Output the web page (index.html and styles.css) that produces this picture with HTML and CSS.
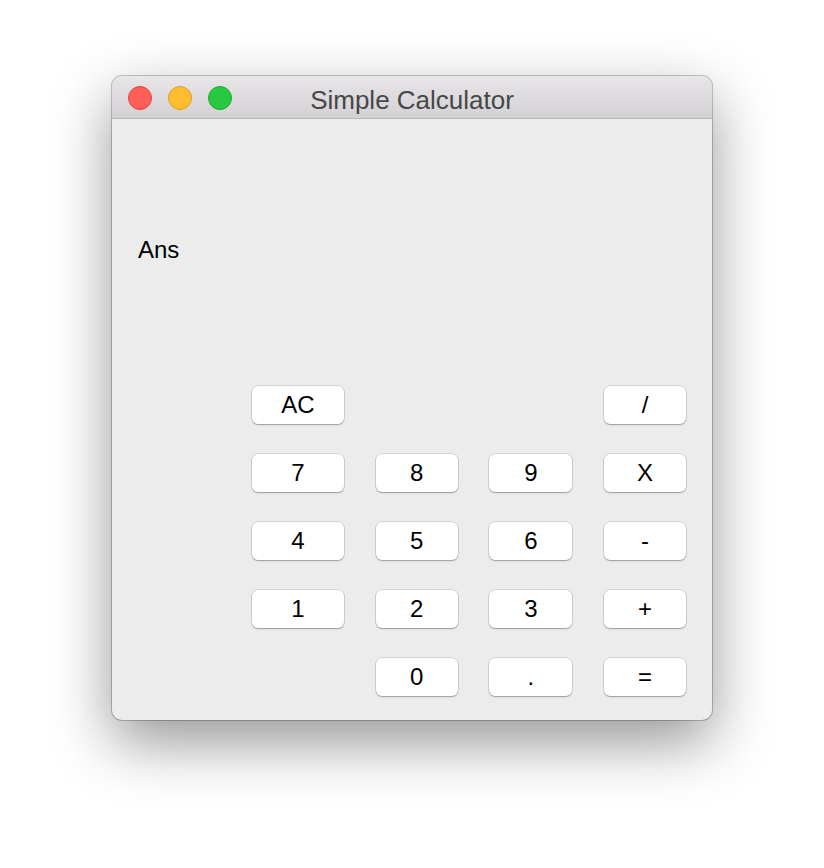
FILE: index.html
```html
<!DOCTYPE html>
<html>
<head>
<meta charset="utf-8">
<link rel="stylesheet" href="styles.css">
</head>
<body>
<div class="window">
  <div class="titlebar">
    <div class="lights">
      <span class="light red"></span>
      <span class="light yellow"></span>
      <span class="light green"></span>
    </div>
    <div class="title">Simple Calculator</div>
    <div></div>
  </div>
  <div class="content">
    <div class="ans">Ans</div>
    <div class="keys">
      <button class="key c1">AC</button>
      <button class="key c4">/</button>
      <button class="key">7</button>
      <button class="key">8</button>
      <button class="key">9</button>
      <button class="key">X</button>
      <button class="key">4</button>
      <button class="key">5</button>
      <button class="key">6</button>
      <button class="key">-</button>
      <button class="key">1</button>
      <button class="key">2</button>
      <button class="key">3</button>
      <button class="key">+</button>
      <button class="key c2">0</button>
      <button class="key">.</button>
      <button class="key">=</button>
    </div>
  </div>
</div>
</body>
</html>
```
FILE: styles.css
```css
html, body {
  margin: 0;
  padding: 0;
  background: #ffffff;
}
body {
  box-sizing: border-box;
  min-height: 868px;
  padding: 76px 0 0 112px;
  font-family: "Liberation Sans", Arial, sans-serif;
}
.window {
  width: 600px;
  height: 644px;
  box-sizing: border-box;
  border-radius: 10px;
  background: #ececec;
  box-shadow: 0 0 0 1px rgba(0,0,0,0.22), 0 22px 60px rgba(0,0,0,0.42);
  overflow: hidden;
  display: flex;
  flex-direction: column;
}
.titlebar {
  height: 43px;
  box-sizing: border-box;
  border-bottom: 1px solid #b8b8b8;
  background: linear-gradient(#e8e6e8, #d3d1d3);
  display: grid;
  grid-template-columns: 1fr auto 1fr;
  align-items: start;
}
.lights {
  display: flex;
  gap: 16px;
  padding: 10px 0 0 16px;
}
.light {
  width: 24px;
  height: 24px;
  box-sizing: border-box;
  border-radius: 50%;
}
.red { background: #ff5f57; border: 1px solid #e0443e; }
.yellow { background: #febc2e; border: 1px solid #dea123; }
.green { background: #28c840; border: 1px solid #1aab29; }
.title {
  font-size: 26px;
  line-height: 29px;
  padding-top: 10px;
  color: #474747;
}
.content {
  flex: 1;
  padding: 117px 26px 0 26px;
}
.ans {
  font-size: 24px;
  line-height: 28px;
  color: #000;
}
.keys {
  margin: 122px 0 0 114px;
  display: grid;
  grid-template-columns: 92px 82px 83px 82px;
  grid-auto-rows: 38px;
  column-gap: 31.67px;
  row-gap: 30px;
}
.key {
  margin: 0;
  padding: 0;
  border: none;
  border-radius: 6px;
  background: #ffffff;
  box-shadow: 0 0 0 0.5px rgba(0,0,0,0.18), 0 1px 1.5px rgba(0,0,0,0.28);
  font-family: "Liberation Sans", Arial, sans-serif;
  font-size: 24px;
  line-height: 38px;
  color: #000;
  text-align: center;
}
.c1 { grid-column: 1; }
.c4 { grid-column: 4; }
.c2 { grid-column: 2; }
```
